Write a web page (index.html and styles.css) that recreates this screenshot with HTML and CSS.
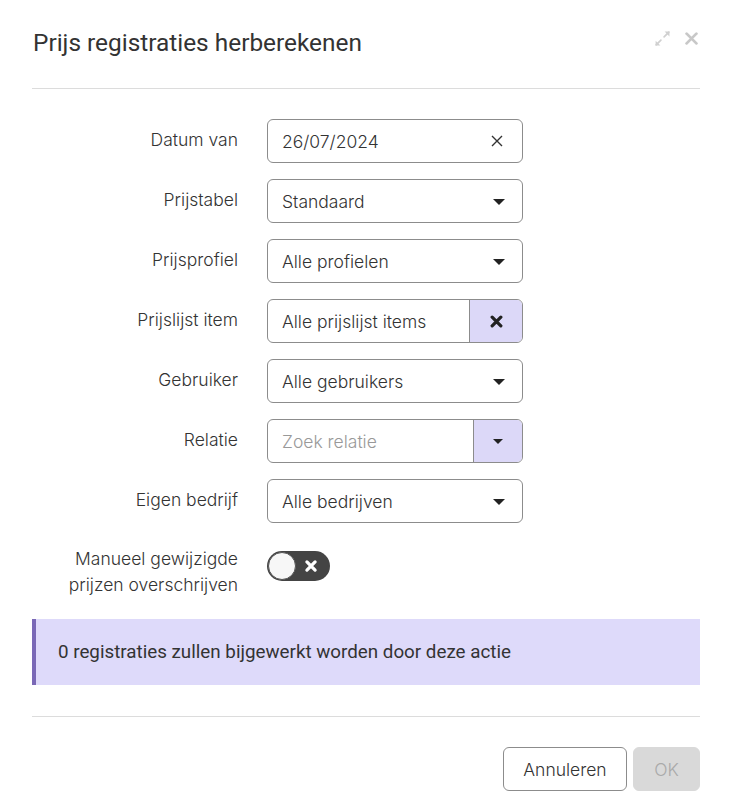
FILE: index.html
```html
<!DOCTYPE html>
<html lang="nl">
<head>
<meta charset="utf-8">
<title>Prijs registraties herberekenen</title>
<link rel="stylesheet" href="styles.css">
</head>
<body>
<div class="dialog">
  <div class="header">
    <h1 class="title">Prijs registraties herberekenen</h1>
    <div class="header-icons">
      <svg class="icon-expand" width="17" height="17" viewBox="0 0 16 16"><g fill="none" stroke="#d0d0d0" stroke-width="1.6" stroke-linecap="round"><path d="M9.5 6.5L14 2"/><path d="M6.5 9.5L2 14"/></g><path d="M10 1.5h4.5v4.5z" fill="#d0d0d0"/><path d="M1.5 10v4.5H6z" fill="#d0d0d0"/></svg>
      <svg class="icon-close" width="13" height="13" viewBox="0 0 12 12"><path d="M1.5 1.5l9 9M10.5 1.5l-9 9" stroke="#c8c8c8" stroke-width="2.6" stroke-linecap="round"/></svg>
    </div>
  </div>
  <div class="divider"></div>

  <div class="form">
    <label class="label">Datum van</label>
    <div class="field">
      <span class="value">26/07/2024</span>
      <svg class="clear" width="12" height="12" viewBox="0 0 12 12"><path d="M1 1l10 10M11 1L1 11" stroke="#333" stroke-width="1.4"/></svg>
    </div>

    <label class="label">Prijstabel</label>
    <div class="field">
      <span class="value">Standaard</span>
      <span class="caret"></span>
    </div>

    <label class="label">Prijsprofiel</label>
    <div class="field">
      <span class="value">Alle profielen</span>
      <span class="caret"></span>
    </div>

    <label class="label">Prijslijst item</label>
    <div class="field group">
      <span class="value">Alle prijslijst items</span>
      <span class="addon addon-x">
        <svg width="13" height="13" viewBox="0 0 12 12"><path d="M2 2l8 8M10 2l-8 8" stroke="#222" stroke-width="3" stroke-linecap="round"/></svg>
      </span>
    </div>

    <label class="label">Gebruiker</label>
    <div class="field">
      <span class="value">Alle gebruikers</span>
      <span class="caret"></span>
    </div>

    <label class="label">Relatie</label>
    <div class="field group">
      <span class="value placeholder">Zoek relatie</span>
      <span class="addon addon-caret"><span class="caret small"></span></span>
    </div>

    <label class="label">Eigen bedrijf</label>
    <div class="field">
      <span class="value">Alle bedrijven</span>
      <span class="caret"></span>
    </div>

    <label class="label label-multi">Manueel gewijzigde<br>prijzen overschrijven</label>
    <div class="toggle-cell">
      <div class="toggle">
        <span class="knob"></span>
        <svg class="toggle-x" width="14" height="14" viewBox="0 0 12 12"><path d="M2.5 2.5l7 7M9.5 2.5l-7 7" stroke="#fff" stroke-width="2.8" stroke-linecap="round"/></svg>
      </div>
    </div>
  </div>

  <div class="alert">0 registraties zullen bijgewerkt worden door deze actie</div>

  <div class="divider footer-divider"></div>

  <div class="footer">
    <button class="btn btn-cancel">Annuleren</button>
    <button class="btn btn-ok" disabled>OK</button>
  </div>
</div>
</body>
</html>
```

FILE: styles.css
```css
* { box-sizing: border-box; }

html, body {
  margin: 0;
  padding: 0;
  background: #fff;
}

body {
  font-family: Inter, "Noto Sans", sans-serif;
  font-weight: 300;
  color: #333;
  width: 732px;
  height: 806px;
  overflow: hidden;
}

.dialog {
  display: flex;
  flex-direction: column;
}

.header {
  height: 88px;
  padding: 0 34px 0 33px;
  display: flex;
  align-items: center;
  justify-content: space-between;
}

.title {
  margin: 0;
  font-family: Roboto, "Liberation Sans", sans-serif;
  font-weight: 400;
  font-size: 24.4px;
  color: #333;
  position: relative;
  top: -2px;
}

.header-icons {
  display: flex;
  align-items: center;
  gap: 14px;
  align-self: flex-start;
  margin-top: 30px;
}

.icon-close { margin-top: -1px; }

.divider {
  height: 1px;
  background: #dcdcdc;
  margin: 0 32px;
}

.form {
  display: grid;
  grid-template-columns: 206px 256px;
  column-gap: 29px;
  row-gap: 16px;
  padding: 30px 0 0 32px;
  align-items: center;
}

.label {
  text-align: right;
  font-size: 17.5px;
  color: #333;
  line-height: 26px;
  position: relative;
  top: -1px;
}

.label-multi {
  margin-top: 8px;
  align-self: start;
}

.field {
  height: 44px;
  border: 1px solid #8c8c8c;
  border-radius: 6px;
  display: flex;
  align-items: center;
  padding: 0 17px 0 14px;
  font-size: 17.5px;
  background: #fff;
}

.value {
  flex: 1;
  color: #333;
  white-space: nowrap;
}

.placeholder { color: #999; }

.clear { margin-right: 2px; }

.caret {
  width: 0;
  height: 0;
  border-left: 6px solid transparent;
  border-right: 6px solid transparent;
  border-top: 6px solid #222;
  margin-top: 2px;
}

.caret.small {
  border-left-width: 5px;
  border-right-width: 5px;
  border-top-width: 5px;
  margin: 0;
}

.group {
  padding-right: 0;
  overflow: hidden;
}

.addon {
  align-self: stretch;
  background: #dcd8f8;
  border-left: 1px solid #8c8c8c;
  display: flex;
  align-items: center;
  justify-content: center;
}

.addon-x { width: 53px; }
.addon-caret { width: 49px; }

.toggle-cell {
  align-self: start;
  margin-top: 12px;
}

.toggle {
  position: relative;
  width: 63px;
  height: 30px;
  border-radius: 15px;
  background: #444;
}

.knob {
  position: absolute;
  left: 1px;
  top: 1px;
  width: 28px;
  height: 28px;
  border-radius: 50%;
  background: #f7f7f7;
  border: 1px solid #555;
}

.toggle-x {
  position: absolute;
  left: 37px;
  top: 8px;
}

.alert {
  margin: 20px 32px 0;
  height: 66px;
  background: #dedafa;
  border-left: 4px solid #7a68b6;
  display: flex;
  align-items: center;
  padding-left: 22px;
  font-family: Roboto, "Liberation Sans", sans-serif;
  font-weight: 400;
  font-size: 18.8px;
  color: #333;
}

.footer-divider { margin-top: 31px; }

.footer {
  display: flex;
  justify-content: flex-end;
  gap: 6px;
  padding: 30px 32px 0 0;
}

.btn {
  height: 44px;
  border-radius: 6px;
  font-family: Inter, "Noto Sans", sans-serif;
  font-weight: 300;
  font-size: 17.5px;
  cursor: pointer;
}

.btn-cancel {
  width: 124px;
  background: #fff;
  border: 1px solid #8c8c8c;
  color: #333;
}

.btn-ok {
  width: 67px;
  background: #d9d9d9;
  border: 1px solid #d9d9d9;
  color: #aaa;
}
```
